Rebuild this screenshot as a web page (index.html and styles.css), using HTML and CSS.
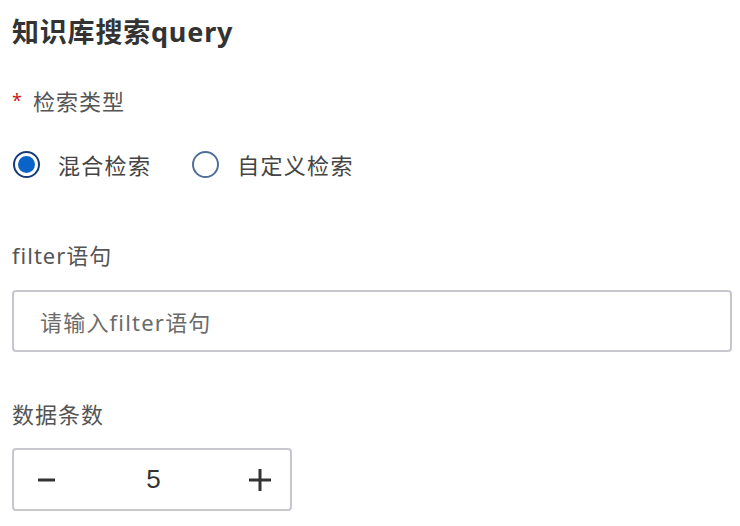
FILE: index.html
```html
<!DOCTYPE html>
<html lang="zh">
<head>
<meta charset="utf-8">
<link rel="stylesheet" href="styles.css">
</head>
<body>
<div class="form">
  <h1 class="title">知识库搜索query</h1>

  <div class="label label-req"><span class="req">*</span>检索类型</div>
  <div class="radios">
    <label class="radio">
      <span class="dot dot-on"></span>
      <span class="radio-text">混合检索</span>
    </label>
    <label class="radio">
      <span class="dot"></span>
      <span class="radio-text">自定义检索</span>
    </label>
  </div>

  <div class="label label-filter">filter语句</div>
  <div class="input"><span class="placeholder">请输入filter语句</span></div>

  <div class="label label-count">数据条数</div>
  <div class="stepper">
    <span class="step-btn">
      <svg width="18" height="4" viewBox="0 0 18 4"><rect x="0" y="0.5" width="17" height="3" fill="#333"/></svg>
    </span>
    <span class="step-value">5</span>
    <span class="step-btn">
      <svg width="22" height="22" viewBox="0 0 22 22"><rect x="0" y="9.5" width="22" height="3" fill="#333"/><rect x="9.5" y="0" width="3" height="22" fill="#333"/></svg>
    </span>
  </div>
</div>
</body>
</html>
```

FILE: styles.css
```css
* { box-sizing: border-box; }
body {
  margin: 0;
  background: #fff;
  font-family: "Noto Sans", "Noto Sans CJK SC", sans-serif;
  color: #4a4a4a;
}
.form {
  padding: 0 8px 0 12px;
  display: flex;
  flex-direction: column;
  align-items: flex-start;
}
.title {
  margin: 16px 0 0 0;
  font-size: 27px;
  line-height: 32px;
  font-weight: 700;
  letter-spacing: 0.8px;
  color: #333;
}
.label {
  font-size: 22px;
  line-height: 30px;
  letter-spacing: 1px;
  color: #555;
}
.label-req { margin-top: 38px; }
.req {
  color: #c9191e;
  font-size: 18px;
  margin-right: 10px;
  position: relative;
  top: -3px;
}
.radios {
  margin-top: 31px;
  display: flex;
  gap: 40px;
}
.radio {
  display: flex;
  align-items: center;
  gap: 18px;
  height: 30px;
}
.dot {
  width: 27px;
  height: 27px;
  border-radius: 50%;
  border: 2px solid #50709a;
  display: flex;
  align-items: center;
  justify-content: center;
  margin-left: 1px;
}
.dot-on { border-color: #173a78; }
.dot-on::after {
  content: "";
  width: 17px;
  height: 17px;
  border-radius: 50%;
  background: #0a63c9;
}
.radio-text {
  font-size: 22px;
  letter-spacing: 1.3px;
  color: #444;
}
.label-filter { margin-top: 61px; }
.input {
  margin-top: 20px;
  width: 720px;
  height: 62px;
  border: 2px solid #c6c8ce;
  border-radius: 4px;
  display: flex;
  align-items: center;
  padding-left: 26px;
}
.placeholder {
  font-size: 22px;
  letter-spacing: 1.2px;
  color: #6b6b6b;
}
.label-count { margin-top: 47px; }
.stepper {
  margin-top: 19px;
  width: 280px;
  height: 63px;
  border: 2px solid #c6c8ce;
  border-radius: 4px;
  display: flex;
  align-items: center;
  justify-content: space-between;
  padding: 0 18px 0 21px;
}
.step-btn {
  display: flex;
  align-items: center;
  justify-content: center;
  width: 24px;
  height: 24px;
}
.step-value {
  font-family: "Liberation Sans", sans-serif;
  font-size: 26px;
  color: #333;
}
```
